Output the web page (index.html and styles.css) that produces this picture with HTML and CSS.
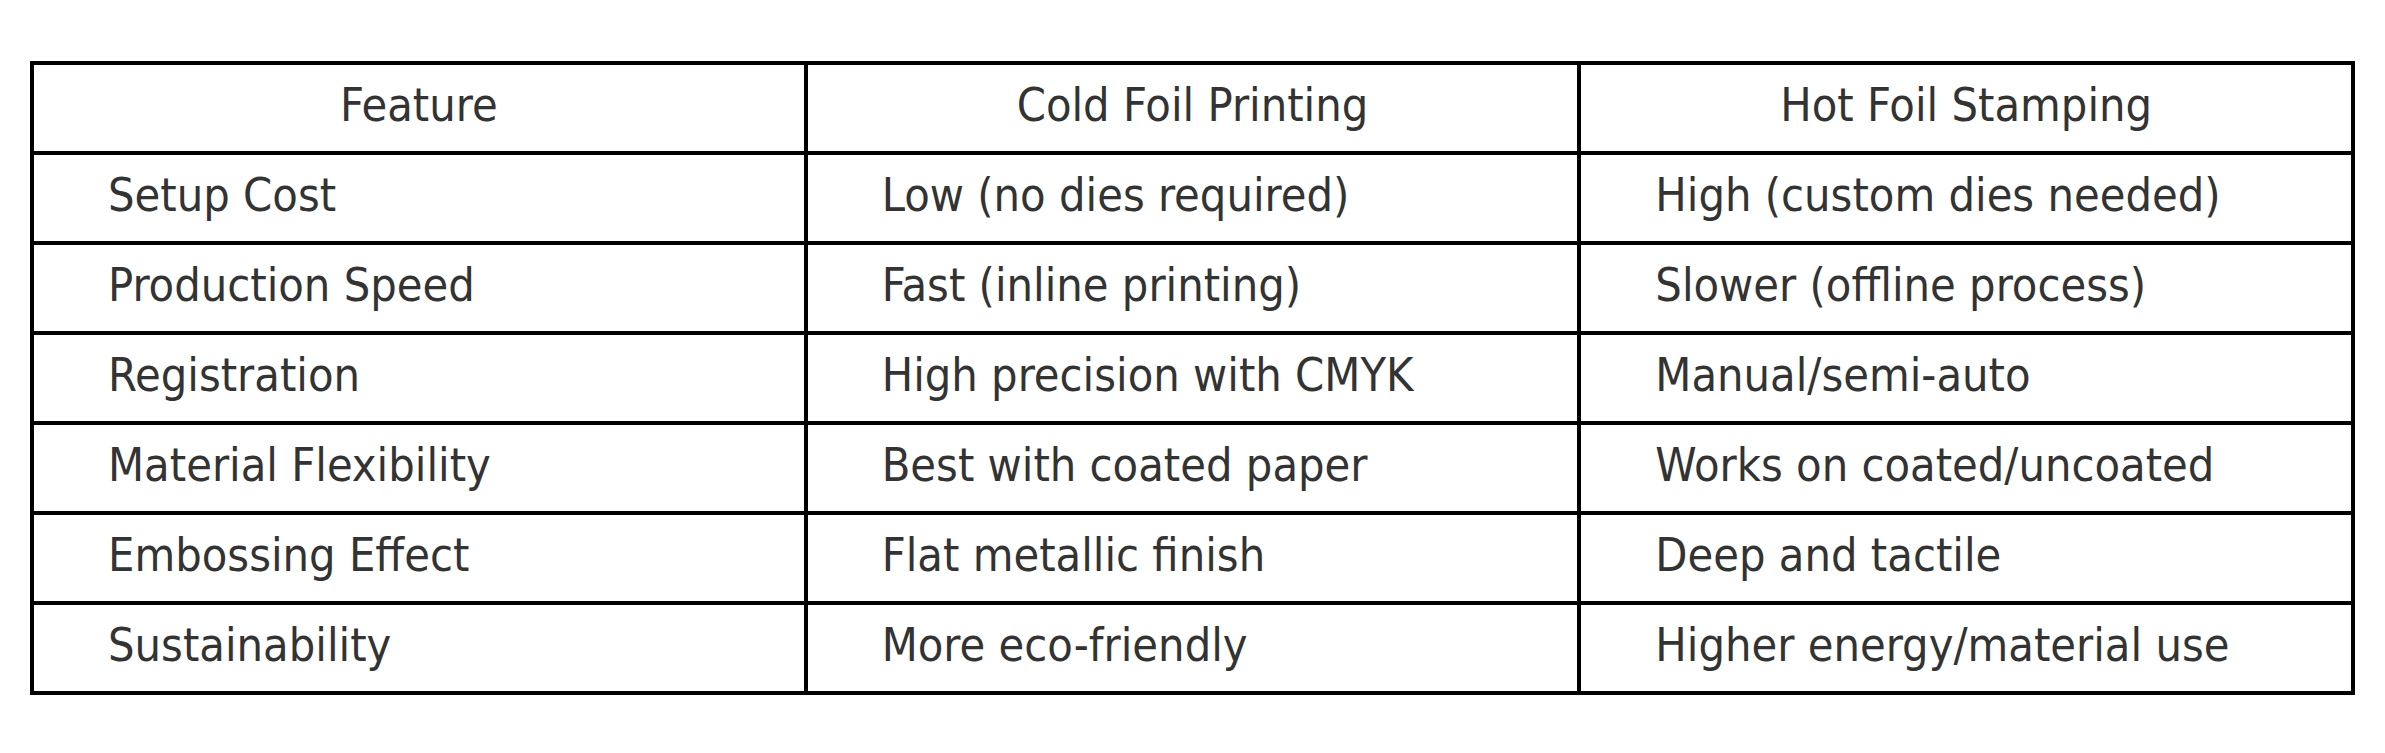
FILE: index.html
```html
<!DOCTYPE html>
<html>
<head>
<meta charset="utf-8">
<link rel="stylesheet" href="styles.css">
</head>
<body>
<div class="page">
<table class="cmp">
  <colgroup><col class="c"><col class="c"><col class="c"></colgroup>
  <thead>
    <tr><th>Feature</th><th>Cold Foil Printing</th><th>Hot Foil Stamping</th></tr>
  </thead>
  <tbody>
    <tr><td>Setup Cost</td><td>Low (no dies required)</td><td>High (custom dies needed)</td></tr>
    <tr><td>Production Speed</td><td>Fast (inline printing)</td><td>Slower (offline process)</td></tr>
    <tr><td>Registration</td><td>High precision with CMYK</td><td>Manual/semi-auto</td></tr>
    <tr><td>Material Flexibility</td><td>Best with coated paper</td><td>Works on coated/uncoated</td></tr>
    <tr><td>Embossing Effect</td><td>Flat metallic finish</td><td>Deep and tactile</td></tr>
    <tr><td>Sustainability</td><td>More eco-friendly</td><td>Higher energy/material use</td></tr>
  </tbody>
</table>
</div>
</body>
</html>
```

FILE: styles.css
```css
html, body {
  margin: 0;
  padding: 0;
  background: #ffffff;
}
.page {
  padding: 61px 30px 0 30px;
}
.cmp {
  width: 2325px;
  border-collapse: collapse;
  table-layout: fixed;
  font-family: "DejaVu Sans Condensed", "DejaVu Sans", sans-serif;
  font-stretch: condensed;
  font-size: 46.5px;
  color: #333333;
}
.cmp th, .cmp td {
  border: 4px solid #000000;
  height: 90px;
  padding: 0 0 6px 0;
  box-sizing: border-box;
  vertical-align: middle;
  font-weight: normal;
  white-space: nowrap;
}
.cmp th {
  text-align: center;
}
.cmp td {
  text-align: left;
  padding-left: 74px;
}
```
